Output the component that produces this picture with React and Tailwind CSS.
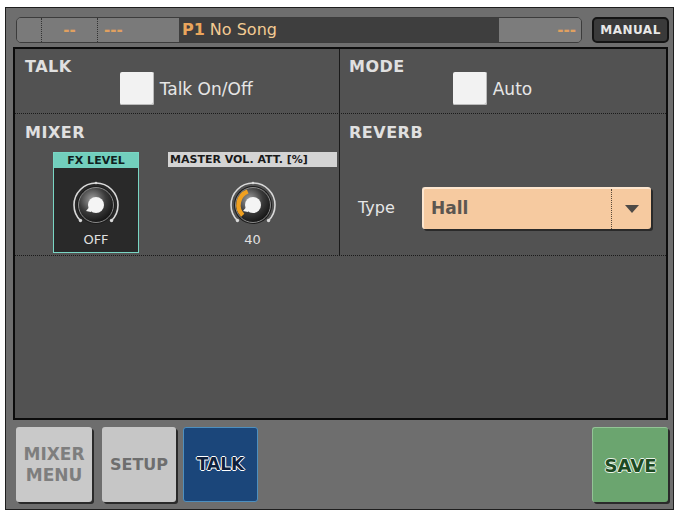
import React from 'react';

const pixel = { fontFamily: '"DejaVu Sans", "Liberation Sans", sans-serif' };

function Knob({ amount }) {
  // arc from 135deg (bottom-left) sweeping 270deg clockwise
  const cx = 25;
  const cy = 25;
  const pt = (r, deg) => {
    const a = (deg * Math.PI) / 180;
    return [cx + r * Math.cos(a), cy + r * Math.sin(a)];
  };
  const arc = (r, from, to) => {
    const [x1, y1] = pt(r, from);
    const [x2, y2] = pt(r, to);
    const large = to - from > 180 ? 1 : 0;
    return `M${x1} ${y1} A${r} ${r} 0 ${large} 1 ${x2} ${y2}`;
  };
  const end = 135 + 270 * amount;
  return (
    <svg width="50" height="50" viewBox="0 0 50 50">
      <defs>
        <radialGradient id="kb" cx="0.4" cy="0.35" r="0.7">
          <stop offset="0" stopColor="#a0a0a0" />
          <stop offset="0.55" stopColor="#3a3a3a" />
          <stop offset="1" stopColor="#111" />
        </radialGradient>
      </defs>
      <path d={arc(22, 135, 405)} fill="none" stroke="#d8d8d8" strokeWidth="1.6" />
      <circle cx={pt(22, 135)[0]} cy={pt(22, 135)[1]} r="1.7" fill="#d8d8d8" />
      <circle cx={pt(22, 405)[0]} cy={pt(22, 405)[1]} r="1.7" fill="#d8d8d8" />
      <circle cx="25" cy="3" r="1.3" fill="#d8d8d8" />
      <circle cx="25" cy="25" r="19" fill="#1c1c1c" />
      <circle cx="25" cy="25" r="17.5" fill="url(#kb)" stroke="#8a8a8a" strokeWidth="1" />
      {amount > 0 && (
        <path d={arc(14.5, 135, end)} fill="none" stroke="#f0a020" strokeWidth="4.5" />
      )}
      <circle cx="25" cy="25" r="8" fill="#f4f4f4" />
      <path d="M21 24 L15 31 L20 32 Z" fill="#f4f4f4" />
    </svg>
  );
}

function Checkbox({ label }) {
  return (
    <div className="flex items-center gap-[6px]">
      <div className="w-[34px] h-[33px] bg-[#f2f2f2] rounded-[2px] shadow-[inset_-1px_-1px_0_#bbb]" />
      <span className="text-[17px] text-[#e6e6e6] mt-[2px]" style={pixel}>{label}</span>
    </div>
  );
}

export default function App() {
  return (
    <div className="w-[676px] h-[512px] bg-white pl-[5px] pt-[7px]">
      <div className="w-[669px] h-[503px] bg-[#6e6e6e] border border-[#1e1e1e] flex flex-col">
        {/* top status bar */}
        <div className="flex items-center mt-[9px] ml-[10px] mr-[4px] h-[26px] gap-[10px]">
          <div className="flex h-full w-[566px] rounded-[5px] border border-[#3c3c3c] overflow-hidden text-[15px]" style={pixel}>
            <div className="w-[25px] bg-[#7a7a7a] border-r border-dotted border-[#333]" />
            <div className="w-[56px] bg-[#7a7a7a] border-r border-dotted border-[#333] flex items-center justify-center text-[#e0a060] font-bold">--</div>
            <div className="w-[81px] bg-[#7a7a7a] flex items-center pl-[6px] text-[#e0a060] font-bold">---</div>
            <div className="flex-1 bg-[#3e3e3e] flex items-center pl-[3px] gap-[5px] text-[16px]">
              <span className="text-[#eaa55c] font-bold">P1</span>
              <span className="text-[#f3cb93]">No Song</span>
            </div>
            <div className="w-[82px] bg-[#7c7c7c] flex items-center justify-end pr-[5px] text-[#e0a060] font-bold">---</div>
          </div>
          <div className="flex-1 h-[26px] rounded-[5px] border-2 border-[#141414] bg-[#3a3a3a] flex items-center justify-center text-[12px] font-bold tracking-[0.5px] text-[#e8e8e8]" style={pixel}>
            MANUAL
          </div>
        </div>

        {/* main panel */}
        <div className="mt-[4px] ml-[7px] mr-[5px] h-[373px] bg-[#525252] border-2 border-[#0c0c0c] flex flex-col">
          <div className="flex h-[65px] border-b border-dotted border-[#1a1a1a]">
            <div className="w-[325px] border-r border-[#1a1a1a] pl-[10px] pt-[6px] flex">
              <span className="text-[16px] font-bold text-[#e0e0e0] tracking-[0.5px]" style={pixel}>TALK</span>
              <div className="ml-[48px] mt-[17px]">
                <Checkbox label="Talk On/Off" />
              </div>
            </div>
            <div className="flex-1 pl-[9px] pt-[6px] flex">
              <span className="text-[16px] font-bold text-[#e0e0e0] tracking-[0.5px]" style={pixel}>MODE</span>
              <div className="ml-[48px] mt-[17px]">
                <Checkbox label="Auto" />
              </div>
            </div>
          </div>

          <div className="flex h-[142px] border-b border-dotted border-[#1a1a1a]">
            <div className="w-[325px] border-r border-[#1a1a1a] pl-[10px] pt-[7px] flex flex-col">
              <span className="text-[16px] font-bold text-[#e0e0e0] tracking-[0.5px]" style={pixel}>MIXER</span>
              <div className="flex mt-[7px]">
                <div className="ml-[28px] w-[86px] h-[101px] border border-[#79d6c4] bg-[#292929] flex flex-col items-center">
                  <div className="w-full h-[15px] bg-[#72cfbd] text-[11px] font-bold text-[#102020] text-center leading-[15px]" style={pixel}>FX LEVEL</div>
                  <div className="mt-[12px]"><Knob amount={0} /></div>
                  <span className="text-[13px] text-[#e0e0e0] leading-[16px] mt-[2px]" style={pixel}>OFF</span>
                </div>
                <div className="ml-[29px] flex flex-col items-center">
                  <div className="w-[169px] h-[15px] bg-[#d4d4d4] text-[11px] font-bold text-[#1a1a1a] pl-[2px] leading-[15px]" style={pixel}>MASTER VOL. ATT. [%]</div>
                  <div className="mt-[13px]"><Knob amount={0.42} /></div>
                  <span className="text-[13px] text-[#e0e0e0] leading-[16px] mt-[2px]" style={pixel}>40</span>
                </div>
              </div>
            </div>
            <div className="flex-1 pl-[9px] pt-[7px] flex flex-col">
              <span className="text-[16px] font-bold text-[#e0e0e0] tracking-[0.5px]" style={pixel}>REVERB</span>
              <div className="flex items-center mt-[42px]">
                <span className="w-[73px] pl-[9px] text-[16px] text-[#e6e6e6]" style={pixel}>Type</span>
                <div className="w-[229px] h-[42px] rounded-[3px] bg-[#f6caa0] border-t-2 border-l-2 border-[#fde6cf] shadow-[2px_2px_0_#2a2a2a] flex items-center">
                  <span className="flex-1 pl-[7px] text-[17px] font-bold text-[#5c5650]" style={pixel}>Hall</span>
                  <div className="w-[40px] h-full border-l border-dotted border-[#5a4a3a] flex items-center justify-center">
                    <svg width="14" height="8" viewBox="0 0 14 8"><path d="M0 0 H14 L7 8 Z" fill="#4e4a46" /></svg>
                  </div>
                </div>
              </div>
            </div>
          </div>
        </div>

        {/* bottom buttons */}
        <div className="flex mt-[7px] ml-[10px] mr-[5px] h-[75px]">
          <div className="w-[76px] h-full rounded-[3px] bg-[#c9c9c9] shadow-[2px_2px_0_#2a2a2a] flex flex-col items-center justify-center text-[17px] font-black leading-[21px] text-[#7e7e7e]" style={pixel}>
            <span>MIXER</span>
            <span>MENU</span>
          </div>
          <div className="ml-[10px] w-[74px] h-full rounded-[3px] bg-[#c6c6c6] shadow-[2px_2px_0_#2a2a2a] flex items-center justify-center text-[16px] font-black text-[#6e6e6e]" style={pixel}>
            SETUP
          </div>
          <div className="ml-[7px] w-[75px] h-full rounded-[3px] bg-[#1b467a] border border-[#4d8fbf] flex items-center justify-center text-[17px] font-black text-[#0e1f3c] [text-shadow:_1px_0_0_#fff,_-1px_0_0_#fff,_0_1px_0_#fff,_0_-1px_0_#fff]" style={pixel}>
            TALK
          </div>
          <div className="ml-auto w-[76px] h-full rounded-[3px] bg-[#6ba56f] shadow-[2px_2px_0_#2a2a2a] border-t border-l border-[#93c496] flex items-center justify-center text-[18px] font-black text-[#1d4a22] [text-shadow:_1px_0_0_#e8f4e8,_-1px_0_0_#e8f4e8,_0_1px_0_#e8f4e8,_0_-1px_0_#e8f4e8]" style={pixel}>
            SAVE
          </div>
        </div>
      </div>
    </div>
  );
}
